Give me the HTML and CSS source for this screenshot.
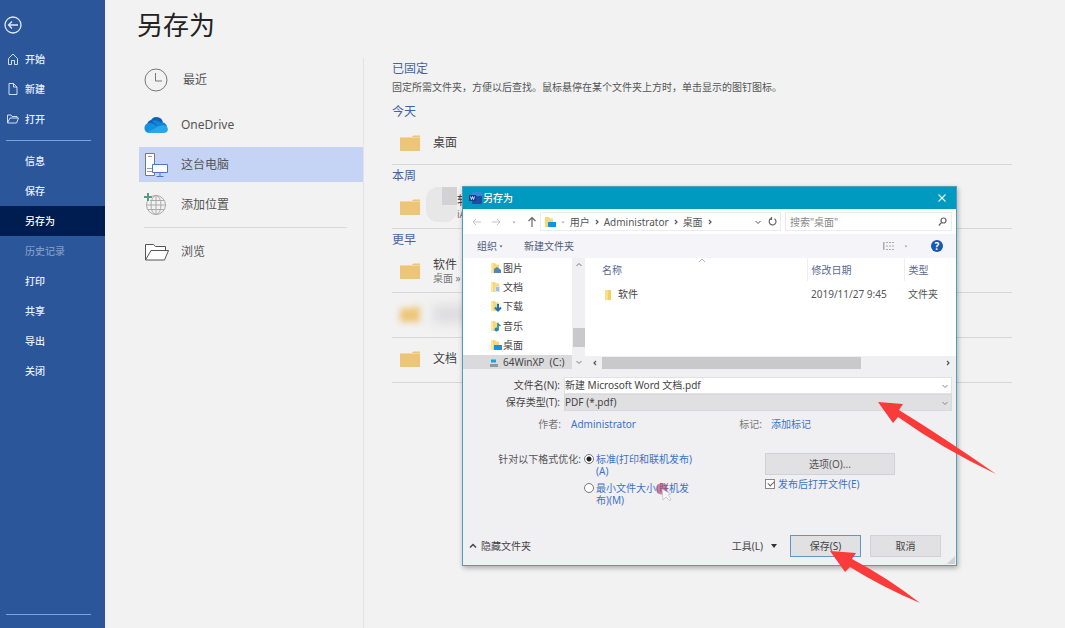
FILE: index.html
```html
<!DOCTYPE html>
<html lang="zh-CN">
<head>
<meta charset="utf-8">
<title>另存为</title>
<link rel="stylesheet" href="styles.css">
</head>
<body>
<svg class="defs" aria-hidden="true">
  <symbol id="folder" viewBox="0 0 20 16"><path d="M0 2h12l1-1.500h7v15.500H0z" fill="#ecc578"/><path d="M0 2.500h20" stroke="#f5d898"/></symbol>
  <symbol id="mini" viewBox="0 0 12 12"><path d="M1 1h4l1 1.500h3V11H1z" fill="#f8d775"/><path d="M1 1h2v10H1z" fill="#fbe6a4"/></symbol>
  <symbol id="down" viewBox="0 0 8 8"><path d="M1.500 3 4 5.500 6.500 3" fill="none" stroke="currentColor"/></symbol>
  <symbol id="dot" viewBox="0 0 8 8"><path d="M2.500 3.500h3L4 5.500z" fill="currentColor"/></symbol>
  <symbol id="right" viewBox="0 0 8 8"><path d="M3 2 5 4 3 6" fill="none" stroke="currentColor" stroke-width="1.200"/></symbol>
</svg>
<div class="app">
  <nav class="side">
    <button class="back" aria-label="返回"><svg width="18" height="18" viewBox="0 0 18 18" fill="none" stroke="#dbe9ff" stroke-width="1.300"><circle cx="9" cy="9" r="8"/><path d="M14 9H4.500M8 5.500 4.500 9 8 12.500"/></svg></button>
    <a class="item" href="#"><svg width="12" height="12" viewBox="0 0 12 12" fill="none" stroke="#cfe0fb"><path d="M1.500 5.500 6 1l4.500 4.500v6h-3V7.500h-3v4h-3z"/></svg>开始</a>
    <a class="item" href="#"><svg width="12" height="12" viewBox="0 0 12 12" fill="none" stroke="#cfe0fb"><path d="M2 .5h4.500l3.500 3.500v7.500H2zM6.500.5V4H10"/></svg>新建</a>
    <a class="item" href="#"><svg width="12" height="12" viewBox="0 0 12 12" fill="none" stroke="#cfe0fb"><path d="M.5 10V2h3.500l1 1.500h5V5M.5 10 3 5h8.500L9.500 10z"/></svg>打开</a>
    <hr class="rule">
    <a class="item sub" href="#">信息</a>
    <a class="item sub" href="#">保存</a>
    <a class="item sub current" href="#">另存为</a>
    <a class="item sub off" href="#">历史记录</a>
    <a class="item sub" href="#">打印</a>
    <a class="item sub" href="#">共享</a>
    <a class="item sub" href="#">导出</a>
    <a class="item sub" href="#">关闭</a>
    <hr class="rule last">
  </nav>
  <main class="main">
    <h1>另存为</h1>
    <div class="cols">
      <div class="places">
        <a class="place recent" href="#"><svg width="24" height="24" viewBox="0 0 24 24" fill="none" stroke="#777"><circle cx="12" cy="12" r="11"/><path d="M11.500 5v8H18"/></svg><span>最近</span></a>
        <a class="place drive" href="#"><svg width="24" height="24" viewBox="0 0 24 24"><path d="M3 12a6 6 0 0 1 4-5 6.500 6.500 0 0 1 12 3l-9 6z" fill="#0b62b8"/><path d="M8 8c4-2 7 1 10 1.500 3 0 5 2 5 5l-5 3z" fill="#1583d5"/><path d="M5.500 20C-1.500 20-1 9.500 6 10c4 0 6 3 11 6z" fill="#1490df"/><path d="M3 19.500 15.500 13c4-2 9 0 8.300 4-.5 2-2 3-4 3H5z" fill="#2aa7e8"/></svg><span>OneDrive</span></a>
        <a class="place pc" href="#"><svg width="24" height="24" viewBox="0 0 24 24" fill="#fff" stroke="#777"><path d="M1.500.5h9v22h-9z"/><path d="M4 3.500h4M3 15.500h5M3 18.500h5" stroke="#99a"/><path d="M8.500 11.500h15v8h-15z" stroke="#4677c8"/><path d="M16 20v3M12.500 23.500h7" stroke="#4677c8"/></svg><span>这台电脑</span></a>
        <a class="place add" href="#"><svg width="24" height="24" viewBox="0 0 24 24" fill="none" stroke="#aaa"><circle cx="12" cy="12" r="9.500"/><ellipse cx="12" cy="12" rx="5" ry="9.500"/><path d="M2.500 12h19M4 7.500h16M4 16.500h16M12 2.500v19"/><path d="M4 0v8M0 4h8" stroke="#f2f2f2" stroke-width="4"/><path d="M4 0v8M0 4h8" stroke="#5b9b7c" stroke-width="2"/></svg><span>添加位置</span></a>
        <hr class="divider">
        <a class="place browse" href="#"><svg width="26" height="24" viewBox="0 0 26 24" fill="#fff" stroke="#555"><path d="M1.500 20V4.500h8l2 2h10v4M1.500 20 7 10.500h17.500L20.500 20z"/></svg><span>浏览</span></a>
      </div>
      <div class="folders">
        <h2>已固定</h2>
        <p class="hint">固定所需文件夹，方便以后查找。鼠标悬停在某个文件夹上方时，单击显示的图钉图标。</p>
        <h2>今天</h2>
        <div class="row"><svg class="ficon"><use href="#folder"/></svg><span>桌面</span></div>
        <h2>本周</h2>
        <div class="row hidden-name"><svg class="ficon"><use href="#folder"/></svg><span>软件<small>iA</small></span><i class="mask"></i></div>
        <h2>更早</h2>
        <div class="row"><svg class="ficon"><use href="#folder"/></svg><span>软件<small>桌面 »</small></span></div>
        <div class="row tall blurred"><svg class="ficon"><use href="#folder"/></svg><i class="smear"></i></div>
        <div class="row tall"><svg class="ficon"><use href="#folder"/></svg><span>文档</span></div>
      </div>
    </div>
  </main>
</div>

<section class="dialog" role="dialog" aria-label="另存为">
  <header class="title">
    <svg width="13" height="12" viewBox="0 0 13 12"><rect x="3" width="10" height="12" rx="1" fill="#1b4fa3"/><path d="M3 0h10v4H3z" fill="#3488dd"/><rect y="3" width="7" height="6" fill="#123e8c"/><path d="m1.500 4.500 1 3 1-3 1 3 1-3" fill="none" stroke="#fff" stroke-width=".8"/></svg>
    <span>另存为</span>
    <button class="close" aria-label="关闭"><svg width="8" height="8" viewBox="0 0 8 8" stroke="#e4f6fb" stroke-width="1.200"><path d="m.5.5 7 7M7.500.5l-7 7"/></svg></button>
  </header>
  <div class="address">
    <div class="arrows">
      <svg width="10" height="10" viewBox="0 0 10 10" fill="none" stroke="#c4c4c8"><path d="M9 5H1.500M4 2 1 5l3 3"/></svg>
      <svg width="10" height="10" viewBox="0 0 10 10" fill="none" stroke="#c4c4c8"><path d="M1 5h7.500M6 2l3 3-3 3"/></svg>
      <svg class="tiny" width="8" height="8"><use href="#dot"/></svg>
      <svg width="10" height="12" viewBox="0 0 10 12" fill="none" stroke="#666" stroke-width="1.200"><path d="M5 11V1.500M1.500 5 5 1.500 8.500 5"/></svg>
    </div>
    <div class="path">
      <svg width="12" height="12" viewBox="0 0 12 12"><path d="M1 1h4l1 1.500h3V11H1z" fill="#f8d775"/><path d="M4 6h8v5H4z" fill="#1592e6"/></svg>
      <svg class="tiny" width="8" height="8"><use href="#dot"/></svg>
      <span>用户</span><svg width="8" height="8"><use href="#right"/></svg><span>Administrator</span><svg width="8" height="8"><use href="#right"/></svg><span>桌面</span><svg width="8" height="8"><use href="#right"/></svg>
      <svg class="push" width="8" height="8"><use href="#down"/></svg>
      <svg width="9" height="9" viewBox="0 0 9 9" fill="none" stroke="#666" stroke-width="1.200"><path d="M3 1.500a3.400 3.400 0 1 0 3.500.2M3.500 0v2.500H1"/></svg>
    </div>
    <div class="search"><input type="text" aria-label="搜索" placeholder='搜索"桌面"'><svg width="9" height="9" viewBox="0 0 9 9" fill="none" stroke="#666" stroke-width="1.200"><circle cx="5.500" cy="3.500" r="2.500"/><path d="M3.500 5.500.8 8.500"/></svg></div>
  </div>
  <div class="tools">
    <button>组织<svg width="8" height="8"><use href="#dot"/></svg></button>
    <button>新建文件夹</button>
    <svg class="push" width="12" height="10" viewBox="0 0 12 10" stroke="#aaaab2"><path d="M.5 1v8" stroke-width="2"/><path d="M3 1.500h8M3 5h8M3 8.500h8" stroke-dasharray="2 1"/></svg>
    <svg class="tiny" width="8" height="8"><use href="#dot"/></svg>
    <button class="help" aria-label="帮助">?</button>
  </div>
  <div class="browser">
    <ul class="tree">
      <li><svg width="12" height="12"><use href="#mini"/><path d="M4 10V7l3-2 4 3v3H4z" fill="#4e86b5"/></svg>图片</li>
      <li><svg width="12" height="12"><use href="#mini"/><path d="M5 5h5v6H5z" fill="#d7e5f1"/><path d="M6 7h3M6 9h3" stroke="#6f99c0"/></svg>文档</li>
      <li><svg width="12" height="12"><use href="#mini"/><path d="M8 4v6M5 7.500 8 10.500l3-3" fill="none" stroke="#1973c0" stroke-width="2"/></svg>下载</li>
      <li><svg width="12" height="12"><use href="#mini"/><path d="M8 10V4l2.500 2" fill="none" stroke="#2288b5" stroke-width="1.500"/><circle cx="6.500" cy="9.500" r="2" fill="#2288b5"/></svg>音乐</li>
      <li><svg width="12" height="12"><use href="#mini"/><path d="M4 6h8v5H4z" fill="#1592e6"/></svg>桌面</li>
      <li class="disk"><svg width="12" height="12" viewBox="0 0 12 12"><path d="M1 3.500h5v3H1z" fill="#1ba0df"/><path d="M0 8h8v3H0z" fill="#8b98a2"/></svg>64WinXP&nbsp; (C:)</li>
    </ul>
    <div class="vbar"><svg width="8" height="8" viewBox="0 0 8 8" fill="none" stroke="#777"><path d="M1.500 5 4 2.500 6.500 5"/></svg><i></i><svg width="8" height="8"><use href="#down"/></svg></div>
    <div class="files">
      <svg class="sort" width="8" height="5" viewBox="0 0 8 5" fill="none" stroke="#b4b4ba"><path d="M1 4 4 1l3 3"/></svg>
      <table>
        <thead><tr><th class="c1">名称</th><th class="c2">修改日期</th><th>类型</th></tr></thead>
        <tbody><tr><td class="name"><svg width="12" height="12"><path d="M3 1h6v10H3z" fill="#f6cf5e"/><path d="M3 1h3v10H3z" fill="#fbe08c"/></svg>软件</td><td class="date">2019/11/27 9:45</td><td>文件夹</td></tr></tbody>
      </table>
      <div class="hbar"><svg class="flip" width="8" height="8"><use href="#right"/></svg><i></i><svg width="8" height="8"><use href="#right"/></svg></div>
    </div>
  </div>
  <div class="fields">
    <label for="fname">文件名(N):</label>
    <div class="field"><input id="fname" type="text" value="新建 Microsoft Word 文档.pdf"><svg width="8" height="8"><use href="#down"/></svg></div>
    <label for="ftype">保存类型(T):</label>
    <div class="field grey"><select id="ftype"><option>PDF (*.pdf)</option></select><svg width="8" height="8"><use href="#down"/></svg></div>
  </div>
  <div class="meta"><span class="who">作者:</span><a href="#">Administrator</a><span class="tag">标记:</span><a href="#">添加标记</a></div>
  <div class="options">
    <span class="for">针对以下格式优化:</span>
    <div class="radios">
      <label><input type="radio" name="opt" checked><span>标准(打印和联机发布)(A)</span></label>
      <label><input type="radio" name="opt"><span>最小文件大小(联机发布)(M)</span></label>
    </div>
    <div class="extra">
      <button class="btn">选项(O)...</button>
      <label><input type="checkbox" checked><span>发布后打开文件(E)</span></label>
    </div>
  </div>
  <footer class="foot">
    <button class="hide"><svg width="8" height="8" viewBox="0 0 8 8" fill="none" stroke="#444" stroke-width="1.500"><path d="M1 5.500 4 2.500l3 3"/></svg>隐藏文件夹</button>
    <button class="menu">工具(L)<svg width="6" height="4" viewBox="0 0 6 4"><path d="M0 0h6L3 4z" fill="#333"/></svg></button>
    <button class="btn primary">保存(S)</button>
    <button class="btn cancel">取消</button>
  </footer>
  <svg class="grip" width="8" height="8" viewBox="0 0 8 8"><path d="M8 0v8H0z" fill="#d0d0d6"/></svg>
  <svg class="pointer" width="18" height="20" viewBox="0 0 18 20"><circle cx="6" cy="6" r="5.500" fill="#b5446e" fill-opacity=".65"/><path d="m6 6 1 11 3-3 4 4 1-2-3-4 3-1z" fill="#f8f8fa" stroke="#bbb" stroke-width=".7"/></svg>
</section>
<svg class="mark one" width="119" height="74" viewBox="0 0 119 74"><path d="M0 1 25 3 21 9 Q68 38 118 73 Q65 48 20 16L15 22z" fill="#fb3a3a"/></svg>
<svg class="mark two" width="91" height="55" viewBox="0 0 91 55"><path d="M0 1 26 3 22 9 Q58 28 90 53 Q52 37 20 17L15 22z" fill="#fb3a3a"/></svg>
</body>
</html>
```
FILE: styles.css
```css
* { box-sizing: border-box; }
body {
  margin: 0;
  min-height: 100vh;
  background: #f2f2f2;
  color: #555;
  font: 10px/14px "Noto Sans", "Noto Sans CJK SC", sans-serif;
}
svg { flex: none; display: block; }
a { color: inherit; text-decoration: none; }
button, input, select { font: inherit; color: inherit; padding: 0; margin: 0; border: 0; background: none; }
.defs { position: absolute; width: 0; height: 0; }
.app { display: flex; min-height: 100vh; }

.side {
  width: 105px;
  flex: none;
  display: flex;
  flex-direction: column;
  padding: 12px 0 13px;
  background: #2b579a;
  color: #e8f1ff;
  font-weight: 500;
}
.back { align-self: flex-start; height: 26px; margin: 0 0 6px 4px; }
.item { display: flex; align-items: center; gap: 6px; height: 30px; padding-left: 7px; }
.sub { padding-left: 25px; }
.current { background: #001d51; color: #fff; }
.off { color: #8099c3; }
.rule { width: 85px; height: 1px; margin: 6px 0 5px 6px; border: 0; background: #7fa3da; }
.last { margin: auto 0 0 6px; }

.main { flex: 1; min-width: 0; display: flex; flex-direction: column; padding-left: 32px; }
h1 { height: 58px; margin: 0; font-size: 26px; line-height: 50px; font-weight: 400; color: #222; }
.cols { flex: 1; display: flex; }
.places { width: 227px; flex: none; padding-left: 2px; border-right: 1px solid #e3e3e3; font-size: 12px; }
.place { display: flex; align-items: center; gap: 13px; height: 44px; padding-left: 5px; }
.recent span { padding-left: 2px; }
.drive { height: 45px; }
.pc { height: 35px; background: #c5d4f5; }
.add { height: 45px; }
.browse { height: 48px; gap: 11px; }
.divider { height: 1px; margin: 0 16px 0 5px; border: 0; background: #d9d9d9; }

.folders { flex: 1; min-width: 0; padding-right: 53px; padding-left: 28px; }
h2 { margin: 0; font-size: 12px; line-height: 22px; font-weight: 400; color: #46629e; }
.hint { margin: 0 0 7px; line-height: 14px; }
.row { position: relative; display: flex; align-items: center; gap: 13px; height: 42px; padding: 0 0 2px 8px; border-bottom: 1px solid #d6d6d6; font-size: 12px; color: #444; line-height: 14px; }
.tall { height: 45px; }
.ficon { width: 20px; height: 16px; }
.row small { display: block; font-size: 10px; line-height: 12px; color: #777; white-space: nowrap; }
.hidden-name span { padding-left: 24px; }
.mask { position: absolute; left: 34px; top: 0; width: 31px; height: 35px; border-radius: 12px 0 12px 12px; background: linear-gradient(#d2d2d4, #d2d2d4) 16px 0 / 16px 18px no-repeat #e7e7e8; }
.blurred .ficon { filter: blur(3px); }
.smear { width: 40px; height: 18px; background: #dcdcde; filter: blur(6px); }

.dialog {
  position: absolute;
  left: 462px;
  top: 186px;
  width: 495px;
  border: 1px solid #4f9db8;
  background: #f0eff2;
  box-shadow: 1px 2px 5px rgba(0, 0, 0, .3);
}
.title { display: flex; align-items: center; gap: 1px; height: 22px; padding: 0 10px 0 6px; background: #0099bf; color: #fff; font-weight: 500; }
.close { margin-left: auto; }
.address { display: flex; height: 25px; padding: 3px 4px; background: #fff; }
.arrows { display: flex; align-items: center; gap: 9px; width: 74px; padding-left: 5px; }
.tiny { color: #aaa; }
.path { display: flex; align-items: center; gap: 3px; width: 246px; padding: 0 3px; border: 1px solid #ececf0; }
.path .push { margin-right: 3px; }
.push { margin-left: auto; }
.search { display: flex; align-items: center; flex: 1; margin-left: 4px; padding: 0 4px; border: 1px solid #ececf0; }
.search input { flex: 1; min-width: 0; outline: 0; }
.search input::placeholder { color: #888; }
.tools { display: flex; align-items: center; height: 24px; padding: 0 13px 0 14px; background: #f4f4f9; color: #505d79; gap: 7px; }
.tools button { display: flex; align-items: center; margin-right: 12px; }
.tools .help { justify-content: center; width: 12px; height: 12px; margin: 0 0 0 14px; border-radius: 6px; background: #1756b5; color: #fff; font-weight: 700; line-height: 12px; }

.browser { display: flex; height: 111px; background: #fff; }
.tree { display: grid; grid-template-rows: repeat(5, 1fr) 14px; width: 109px; margin: 0; padding: 0; list-style: none; overflow: hidden; color: #444; }
.tree li { display: flex; align-items: center; gap: 1px; padding-left: 27px; white-space: nowrap; }
.tree .disk { background: #dadadc; }
.vbar { display: flex; flex-direction: column; align-items: center; width: 13px; padding: 3px 0; background: #f0eff2; color: #777; }
.vbar i { width: 12px; height: 19px; margin: auto 0 11px; background: #c9c9cc; }
.files { position: relative; flex: 1; display: flex; flex-direction: column; }
.sort { position: absolute; left: 113px; top: 0; }
table { width: 100%; border-collapse: collapse; table-layout: fixed; }
th, td { height: 23px; padding: 0 0 0 4px; font-weight: 400; text-align: left; white-space: nowrap; }
th { color: #5b6a90; border-left: 1px solid #ededf2; }
.c1 { width: 222px; padding-left: 17px; border: 0; }
.c2 { width: 97px; }
td { height: 26px; }
.name { padding-left: 17px; color: #444; }
.name svg { display: inline-block; margin-right: 4px; vertical-align: middle; }
.hbar { display: flex; align-items: center; height: 13px; margin-top: auto; padding: 0 4px 0 6px; background: #f0eff2; }
.hbar i { width: 259px; height: 12px; margin: 0 auto 0 3px; background: #c9c9cc; }
.flip { transform: scaleX(-1); }

.fields { display: grid; grid-template-columns: 97px 1fr; column-gap: 4px; padding: 8px 4px 0 0; color: #444; }
.fields label { text-align: right; line-height: 17px; }
.field { display: flex; align-items: center; height: 17px; padding: 0 2px 0 0; border: 1px solid #e2e2e5; background: #fff; color: #444; }
.field svg { color: #888; }
.field input, .field select { flex: 1; min-width: 0; height: 15px; line-height: 15px; outline: 0; appearance: none; }
.grey { background: #e0dfe2; border-color: #d9d8dc; }
.meta { display: flex; height: 26px; line-height: 26px; color: #777; }
.meta a, .radios, .extra label { color: #3b73c6; }
.who { width: 98px; margin-right: 10px; text-align: right; }
.meta .tag { margin-left: auto; padding-right: 9px; }
.meta a:last-child { margin-right: 145px; }
.options { display: flex; align-items: flex-start; height: 90px; padding-top: 16px; line-height: 12px; }
.for { width: 118px; text-align: right; white-space: nowrap; }
.radios { width: 108px; margin-left: 3px; }
.radios label { display: flex; align-items: flex-start; gap: 2px; height: 29px; }
.radios span { overflow-wrap: anywhere; }
.radios input { flex: none; appearance: none; width: 10px; height: 10px; margin-top: 1px; border: 1px solid #777; border-radius: 5px; background: #fff; }
.radios input:checked { background: radial-gradient(circle, #222 0 2px, #fff 3px); }
.extra { margin-left: auto; padding-right: 61px; }
.btn { display: block; height: 22px; border: 1px solid #d2d1d5; background: #e1e0e3; text-align: center; }
.extra .btn { width: 130px; margin-bottom: 3px; }
.extra label { display: flex; align-items: center; gap: 3px; }
.extra input { appearance: none; width: 10px; height: 10px; border: 1px solid #888; background: #fff; }
.extra input:checked::before { content: ""; display: block; width: 3px; height: 5px; margin: 0 0 0 3px; border: solid #666; border-width: 0 1px 1px 0; transform: rotate(45deg); }
.foot { display: flex; align-items: center; height: 38px; padding: 0 15px 0 6px; color: #444; }
.foot .hide, .foot .menu { display: flex; align-items: center; gap: 4px; }
.foot .menu { margin: 0 13px 0 auto; gap: 8px; }
.foot .btn { width: 71px; }
.foot .primary { border-color: #5d97cc; margin-right: 9px; }
.grip { position: absolute; right: 1px; bottom: 1px; }
.pointer { position: absolute; left: 193px; top: 296px; }
.mark { position: absolute; }
.one { left: 878px; top: 401px; }
.two { left: 830px; top: 550px; }
```
